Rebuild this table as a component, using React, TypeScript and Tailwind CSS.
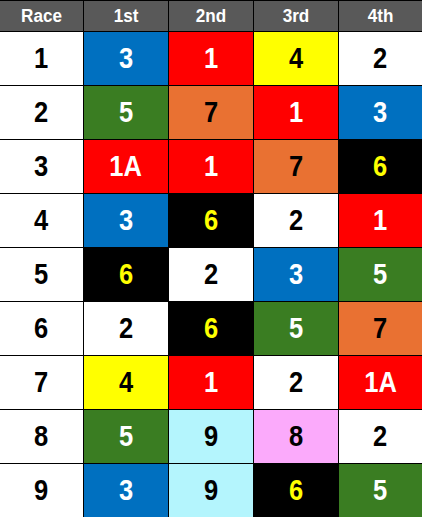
import { Fragment } from "react";

const cloth: Record<string, string> = {
  "1": "bg-[#ff0000] text-white",
  "1A": "bg-[#ff0000] text-white",
  "2": "bg-white text-black",
  "3": "bg-[#0070c0] text-white",
  "4": "bg-[#ffff00] text-black",
  "5": "bg-[#3a7d22] text-white",
  "6": "bg-black text-[#ffff00]",
  "7": "bg-[#e97132] text-black",
  "8": "bg-[#fbaafb] text-black",
  "9": "bg-[#b4f5fd] text-black",
};

const results: string[][] = [
  ["3", "1", "4", "2"],
  ["5", "7", "1", "3"],
  ["1A", "1", "7", "6"],
  ["3", "6", "2", "1"],
  ["6", "2", "3", "5"],
  ["2", "6", "5", "7"],
  ["4", "1", "2", "1A"],
  ["5", "9", "8", "2"],
  ["3", "9", "6", "5"],
];

const headers = ["Race", "1st", "2nd", "3rd", "4th"];

function Num({ v }: { v: string | number }) {
  return <span className="inline-block scale-x-88">{v}</span>;
}

export default function App() {
  return (
    <div
      className="w-[422px] h-[517px] overflow-hidden bg-black pt-px font-bold"
      style={{ fontFamily: '"Liberation Sans", Arial, sans-serif' }}
    >
      <div className="grid grid-cols-[83px_84px_84px_84px_83px] grid-rows-[30px_repeat(9,53px)] gap-px">
        {headers.map((h) => (
          <div
            key={h}
            className="bg-[#595959] text-white text-[18px] flex items-center justify-center pt-px"
          >
            <span className="inline-block scale-x-95">{h}</span>
          </div>
        ))}
        {results.map((row, i) => (
          <Fragment key={i}>
            <div className="bg-white text-black text-[29px] flex items-center justify-center">
              <Num v={i + 1} />
            </div>
            {row.map((n, j) => (
              <div
                key={j}
                className={`${cloth[n]} text-[29px] flex items-center justify-center`}
              >
                <Num v={n} />
              </div>
            ))}
          </Fragment>
        ))}
      </div>
    </div>
  );
}
